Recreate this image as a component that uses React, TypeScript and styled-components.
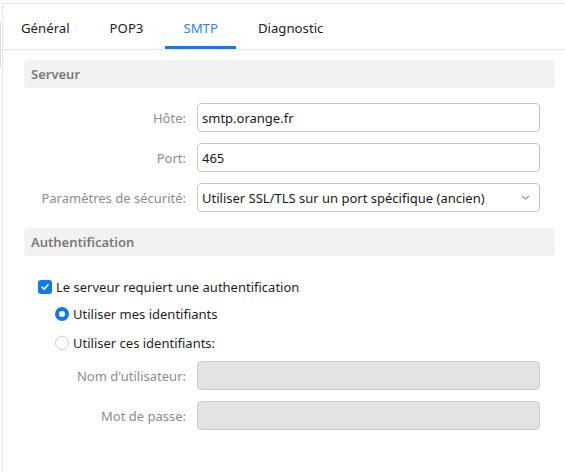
import React from 'react';
import styled, { createGlobalStyle } from 'styled-components';

const GlobalStyle = createGlobalStyle`
  html, body {
    margin: 0;
    padding: 0;
    background: #fff;
  }
  body {
    font-family: 'Noto Sans', 'Liberation Sans', sans-serif;
    font-size: 13px;
    color: #1f1f1f;
  }
`;

const Root = styled.div`
  display: flex;
  align-items: flex-start;
  height: 472px;
  overflow: hidden;
`;

const Strip = styled.div`
  width: 1px;
  height: 46px;
  margin-top: 22px;
  margin-right: 1px;
  background: #dcdcdc;
`;

const Panel = styled.div`
  flex: 1;
  margin-top: 3px;
  height: 469px;
  border-top: 1px solid #e6e6e6;
  border-left: 1px solid #e6e6e6;
  box-sizing: border-box;
`;

const TabBar = styled.div`
  display: flex;
  gap: 4px;
  height: 46px;
  border-bottom: 1px solid #e6e6e6;
  box-sizing: border-box;
`;

const Tab = styled.div<{ $active?: boolean }>`
  display: flex;
  align-items: center;
  box-sizing: border-box;
  height: 45px;
  padding: 5px 18px 0;
  border-bottom: 3px solid ${(p) => (p.$active ? '#0a7cf2' : 'transparent')};
  color: ${(p) => (p.$active ? '#2b86f0' : '#222')};
  font-size: 13.2px;
`;

const Content = styled.div`
  padding: 10px 10px 0 21px;
`;

const SectionHeader = styled.div<{ $gap?: number }>`
  height: 28px;
  display: flex;
  align-items: center;
  padding-left: 7px;
  border-radius: 4px;
  background: #f2f2f2;
  color: #7a7a7a;
  font-weight: 600;
  font-size: 13px;
  margin-top: ${(p) => p.$gap ?? 0}px;
`;

const Form = styled.div<{ $top: number }>`
  display: grid;
  grid-template-columns: 162px 1fr;
  column-gap: 11px;
  row-gap: 11px;
  align-items: center;
  padding-right: 15px;
  margin-top: ${(p) => p.$top}px;
`;

const Label = styled.div`
  text-align: right;
  color: #8c8c8c;
  white-space: nowrap;
`;

const Field = styled.div<{ $disabled?: boolean }>`
  position: relative;
  height: 29px;
  box-sizing: border-box;
  display: flex;
  align-items: center;
  padding: 0 4px;
  border: 1px solid ${(p) => (p.$disabled ? '#cdcdcd' : '#c6c6c6')};
  border-radius: 4px;
  background: ${(p) => (p.$disabled ? '#e3e3e3' : '#fff')};
  color: #1a1a1a;
`;

const Chevron = styled.svg`
  position: absolute;
  right: 9px;
  top: 10px;
`;

const CheckRow = styled.div<{ $indent: number; $top: number }>`
  display: flex;
  align-items: center;
  gap: 4px;
  padding-left: ${(p) => p.$indent}px;
  margin-top: ${(p) => p.$top}px;
  height: 18px;
`;

const CheckBox = styled.div`
  width: 14px;
  height: 14px;
  border-radius: 3px;
  background: #0f78ee;
  display: flex;
  align-items: center;
  justify-content: center;
`;

const Radio = styled.div<{ $checked?: boolean }>`
  width: 14px;
  height: 14px;
  box-sizing: border-box;
  border-radius: 50%;
  border: ${(p) => (p.$checked ? '4px solid #0f78ee' : '1px solid #cfcfcf')};
  background: #fff;
`;

const App = () => {
  return (
    <>
      <GlobalStyle />
      <Root>
        <Strip />
        <Panel>
          <TabBar>
            <Tab>Général</Tab>
            <Tab>POP3</Tab>
            <Tab $active>SMTP</Tab>
            <Tab>Diagnostic</Tab>
          </TabBar>
          <Content>
            <SectionHeader>Serveur</SectionHeader>
            <Form $top={15}>
              <Label>Hôte:</Label>
              <Field>smtp.orange.fr</Field>
              <Label>Port:</Label>
              <Field>465</Field>
              <Label>Paramètres de sécurité:</Label>
              <Field>
                Utiliser SSL/TLS sur un port spécifique (ancien)
                <Chevron width="9" height="7" viewBox="0 0 9 7">
                  <path d="M1 2 L4.5 5 L8 2" fill="none" stroke="#999" strokeWidth="1.2" />
                </Chevron>
              </Field>
            </Form>
            <SectionHeader $gap={16}>Authentification</SectionHeader>
            <CheckRow $indent={14} $top={22}>
              <CheckBox>
                <svg width="10" height="10" viewBox="0 0 10 10">
                  <path d="M2 5.2 L4.2 7.2 L8 2.8" fill="none" stroke="#fff" strokeWidth="1.7" strokeLinecap="round" strokeLinejoin="round" />
                </svg>
              </CheckBox>
              Le serveur requiert une authentification
            </CheckRow>
            <CheckRow $indent={31} $top={9}>
              <Radio $checked />
              Utiliser mes identifiants
            </CheckRow>
            <CheckRow $indent={31} $top={11}>
              <Radio />
              Utiliser ces identifiants:
            </CheckRow>
            <Form $top={9}>
              <Label>Nom d'utilisateur:</Label>
              <Field $disabled />
              <Label>Mot de passe:</Label>
              <Field $disabled />
            </Form>
          </Content>
        </Panel>
      </Root>
    </>
  );
};

export default App;
